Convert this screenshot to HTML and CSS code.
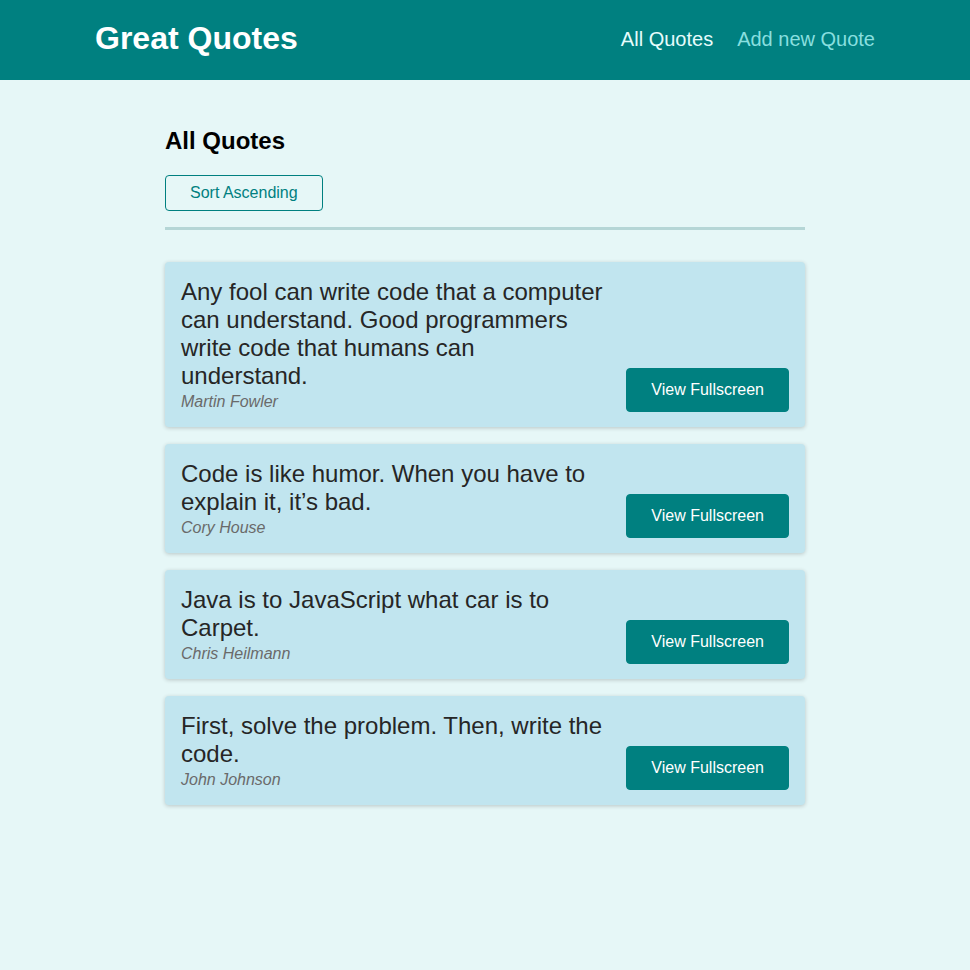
FILE: index.html
```html
<!DOCTYPE html>
<html lang="en">
<head>
<meta charset="utf-8">
<title>Great Quotes</title>
<link rel="stylesheet" href="styles.css">
</head>
<body>
<header class="header">
  <div class="logo">Great Quotes</div>
  <nav class="nav">
    <ul>
      <li><a href="#" class="active">All Quotes</a></li>
      <li><a href="#">Add new Quote</a></li>
    </ul>
  </nav>
</header>
<main class="main">
  <h2 class="title">All Quotes</h2>
  <div class="sorting">
    <button class="sort-btn">Sort Ascending</button>
  </div>
  <ul class="list">
    <li class="item">
      <figure>
        <blockquote>Any fool can write code that a computer can understand. Good programmers write code that humans can understand.</blockquote>
        <figcaption>Martin Fowler</figcaption>
      </figure>
      <a class="btn" href="#">View Fullscreen</a>
    </li>
    <li class="item">
      <figure>
        <blockquote>Code is like humor. When you have to explain it, it’s bad.</blockquote>
        <figcaption>Cory House</figcaption>
      </figure>
      <a class="btn" href="#">View Fullscreen</a>
    </li>
    <li class="item">
      <figure>
        <blockquote>Java is to JavaScript what car is to Carpet.</blockquote>
        <figcaption>Chris Heilmann</figcaption>
      </figure>
      <a class="btn" href="#">View Fullscreen</a>
    </li>
    <li class="item">
      <figure>
        <blockquote>First, solve the problem. Then, write the code.</blockquote>
        <figcaption>John Johnson</figcaption>
      </figure>
      <a class="btn" href="#">View Fullscreen</a>
    </li>
  </ul>
</main>
</body>
</html>
```
FILE: styles.css
```css
* { box-sizing: border-box; }
html, body {
  margin: 0;
  padding: 0;
}
body {
  font-family: "Liberation Sans", Arial, sans-serif;
  background-color: #e6f7f7;
  color: #000;
  min-height: 970px;
}
.header {
  width: 100%;
  height: 80px;
  display: flex;
  align-items: center;
  justify-content: space-between;
  background-color: #008080;
  padding: 0 95px 2px;
}
.logo {
  font-size: 32px;
  color: #fff;
  font-weight: bold;
  padding-bottom: 1px;
}
.nav ul {
  list-style: none;
  margin: 0;
  padding: 0;
  display: flex;
  align-items: baseline;
}
.nav li {
  margin-left: 24px;
  font-size: 20px;
}
.nav a {
  text-decoration: none;
  color: #88dfdf;
}
.nav a.active {
  color: #e6fcfc;
}
.main {
  width: 640px;
  margin: 47px auto 0;
}
.title {
  font-size: 24px;
  font-weight: bold;
  margin: 0;
}
.sorting {
  padding: 20px 0 16px;
  border-bottom: 3px solid #b5d6d6;
}
.sort-btn {
  font: inherit;
  font-size: 16px;
  background: transparent;
  color: #008080;
  border: 1px solid #008080;
  border-radius: 4px;
  padding: 8px 24px;
  cursor: pointer;
}
.list {
  list-style: none;
  margin: 32px 0 0;
  padding: 0;
}
.item {
  display: flex;
  justify-content: space-between;
  align-items: flex-end;
  margin: 0 0 17px;
  background-color: #c1e5ef;
  border-radius: 4px;
  padding: 16px;
  box-shadow: 0 1px 4px rgba(0, 0, 0, 0.2);
}
.item figure {
  margin: 0 22px 0 0;
  padding: 0;
  flex: 1;
}
.item blockquote {
  margin: 0;
  font-size: 24px;
  color: #262626;
}
.item figcaption {
  margin-top: 3px;
  font-style: italic;
  font-size: 16px;
  color: #6a6a6a;
}
.btn {
  flex: none;
  display: inline-block;
  text-decoration: none;
  background-color: #008080;
  color: #fff;
  border: 1px solid #008080;
  border-radius: 4px;
  padding: 12px 24px;
  font-size: 16px;
  margin-bottom: -1px;
}
```
